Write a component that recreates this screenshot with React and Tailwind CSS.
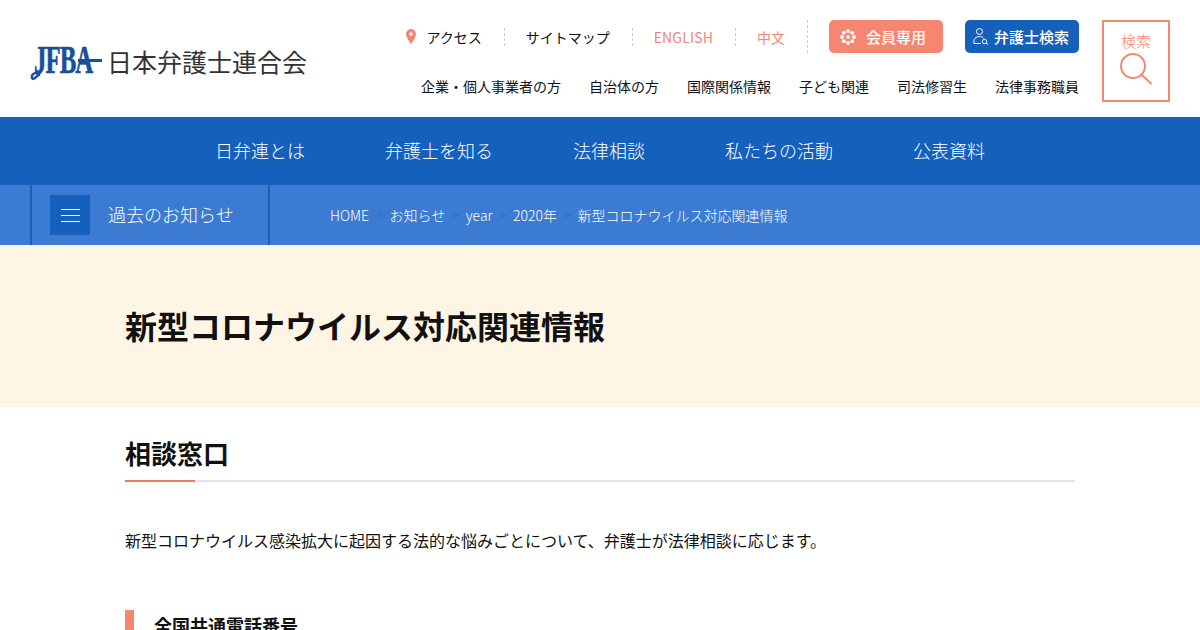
import React from 'react';

const topLinks = ['企業・個人事業者の方', '自治体の方', '国際関係情報', '子ども関連', '司法修習生', '法律事務職員'];
const mainNav = ['日弁連とは', '弁護士を知る', '法律相談', '私たちの活動', '公表資料'];
const crumbs = ['HOME', 'お知らせ', 'year', '2020年', '新型コロナウイルス対応関連情報'];

const Divider = () => <span className="h-[18px] border-l border-dashed border-[#cfcfcf]" />;

const Logo = () => (
    <div className="flex items-center w-[277px] h-[42px]">
        <div className="relative w-[74px] h-[42px] shrink-0">
            <span className="absolute left-[4px] top-[-1px] font-['Liberation_Serif',serif] font-bold text-[40px] leading-[42px] tracking-[-1.500px] text-[#1a4f9c] [-webkit-text-stroke:0.7px_#1a4f9c] scale-x-[0.62] origin-left">JFBA</span>
            <svg className="absolute inset-0" width="74" height="42" viewBox="0 0 74 42" fill="none" stroke="#1a4f9c">
                <path d="M48 20.500H72" strokeWidth="3" />
                <path d="M12 26C12 32 9 35 5 38C1 41 1 35 4 33.500C7 32 9 34 9 36" strokeWidth="2.500" />
            </svg>
        </div>
        <span className="ml-[3px] text-[25px] leading-none text-[#333] whitespace-nowrap">日本弁護士連合会</span>
    </div>
);

const Flower = () => (
    <svg width="16" height="16" viewBox="0 0 16 16" fill="#fff">
        <circle cx="8" cy="8" r="1.800" />
        <circle cx="8" cy="2" r="1.900" />
        <circle cx="8" cy="14" r="1.900" />
        <circle cx="2" cy="8" r="1.900" />
        <circle cx="14" cy="8" r="1.900" />
        <circle cx="3.800" cy="3.800" r="1.900" />
        <circle cx="12.200" cy="3.800" r="1.900" />
        <circle cx="3.800" cy="12.200" r="1.900" />
        <circle cx="12.200" cy="12.200" r="1.900" />
    </svg>
);

const PersonSearch = () => (
    <svg width="17" height="17" viewBox="0 0 17 17" fill="none" stroke="#fff" strokeWidth="1">
        <circle cx="6.500" cy="3.500" r="3" />
        <path d="M1 15.500C0 11 3 8.500 6.500 8.500C8 8.500 9.500 9 10.500 10" />
        <path d="M1 15.500H8" />
        <circle cx="11.500" cy="13.500" r="2.200" />
        <path d="M13 15.200L15 16.500" />
    </svg>
);

const App = () => {
    return (
        <div className="h-[630px] overflow-hidden bg-white text-[#111] font-['Noto_Sans_CJK_JP','Noto_Sans',sans-serif]">
            <header className="h-[117px] flex items-start">
                <div className="ml-[30px] mt-[40px]">
                    <Logo />
                </div>
                <div className="ml-auto mt-[20px] flex flex-col items-end">
                    <div className="flex items-center h-[33px] text-sm">
                        <svg className="mr-[10px]" width="10" height="15" viewBox="0 0 10 15" fill="#f58672">
                            <path fillRule="evenodd" d="M5 0a5 5 0 0 1 5 5c0 3.500-5 10-5 10S0 8.500 0 5a5 5 0 0 1 5-5Zm0 3.200a1.800 1.800 0 1 0 0 3.600 1.800 1.800 0 0 0 0-3.600Z" />
                        </svg>
                        <span className="mr-[22px]">アクセス</span>
                        <Divider />
                        <span className="ml-[21px] mr-[22px]">サイトマップ</span>
                        <Divider />
                        <span className="ml-[21px] mr-[22px] text-[#e8897b] tracking-[0.15px]">ENGLISH</span>
                        <Divider />
                        <span className="ml-[21px] mr-[22px] text-[#f58672]">中文</span>
                        <span className="h-[33px] border-l border-dashed border-[#cfcfcf]" />
                        <a className="ml-[21px] w-[114px] h-[33px] rounded-[5px] bg-[#f58672] text-white text-[15px] font-medium flex items-center pl-[11px] gap-[10px]">
                            <Flower />
                            <span>会員専用</span>
                        </a>
                        <a className="ml-[22px] w-[114px] h-[33px] rounded-[5px] bg-[#1560bb] text-white text-[15px] font-medium flex items-center pl-[8px] gap-[4px]">
                            <PersonSearch />
                            <span>弁護士検索</span>
                        </a>
                    </div>
                    <nav className="flex gap-[28px] mt-[23px] text-sm leading-5">
                        {topLinks.map(l => <a key={l}>{l}</a>)}
                    </nav>
                </div>
                <a className="ml-[23px] mr-[30px] mt-[20px] w-[68px] h-[82px] border-2 border-[#f58672] flex flex-col items-center pt-[9px] text-[#f58672] text-[15px] leading-[20px] font-light">
                    <span>検索</span>
                    <svg className="mt-[2px] ml-[1px]" width="33" height="32" viewBox="0 0 33 32" fill="none" stroke="#f58672" strokeWidth="2">
                        <circle cx="13" cy="13" r="12" />
                        <path d="M21.500 21.500L31.500 31" />
                    </svg>
                </a>
            </header>

            <nav className="h-[68px] pb-[2px] bg-[#1560bb] flex items-center justify-center gap-[80px] text-white text-lg font-light">
                {mainNav.map(n => <a key={n}>{n}</a>)}
            </nav>

            <div className="h-[60px] bg-[#3b7bd1] pl-[30px] flex items-center text-white">
                <div className="w-[240px] h-full border-x-2 border-[#1560bb] flex items-center pl-[18px]">
                    <button className="w-[40px] h-[40px] bg-[#1560bb] flex flex-col items-center justify-center gap-[5px]">
                        <span className="w-[19px] h-px bg-white" />
                        <span className="w-[19px] h-px bg-white" />
                        <span className="w-[19px] h-px bg-white" />
                    </button>
                    <span className="ml-[18px] mb-[2px] text-lg font-light">過去のお知らせ</span>
                </div>
                <div className="ml-[60px] flex items-center text-sm font-light">
                    {crumbs.map((c, i) => (
                        <React.Fragment key={c}>
                            {i > 0 && <span className="mx-[7px] text-xs text-[#1f68c2]">&gt;</span>}
                            <a>{c}</a>
                        </React.Fragment>
                    ))}
                </div>
            </div>

            <section className="h-[162px] pb-[2px] bg-[#fff5e5] px-[125px] flex items-center">
                <h1 className="text-[32px] font-bold leading-none">新型コロナウイルス対応関連情報</h1>
            </section>

            <main className="px-[125px]">
                <h2 className="mt-[28px] h-[47px] relative border-b-2 border-[#e5e5e5] text-[26px] leading-[36px] font-bold">
                    相談窓口
                    <span className="absolute left-0 bottom-[-2px] w-[70px] h-[2px] bg-[#f0795f]" />
                </h2>
                <p className="mt-[46px] text-base leading-[24px]">新型コロナウイルス感染拡大に起因する法的な悩みごとについて、弁護士が法律相談に応じます。</p>
                <h3 className="mt-[58px] border-l-[9px] border-[#f58672] pl-[20px] text-lg leading-[30px] font-bold">全国共通電話番号</h3>
            </main>
        </div>
    );
};

export default App;
